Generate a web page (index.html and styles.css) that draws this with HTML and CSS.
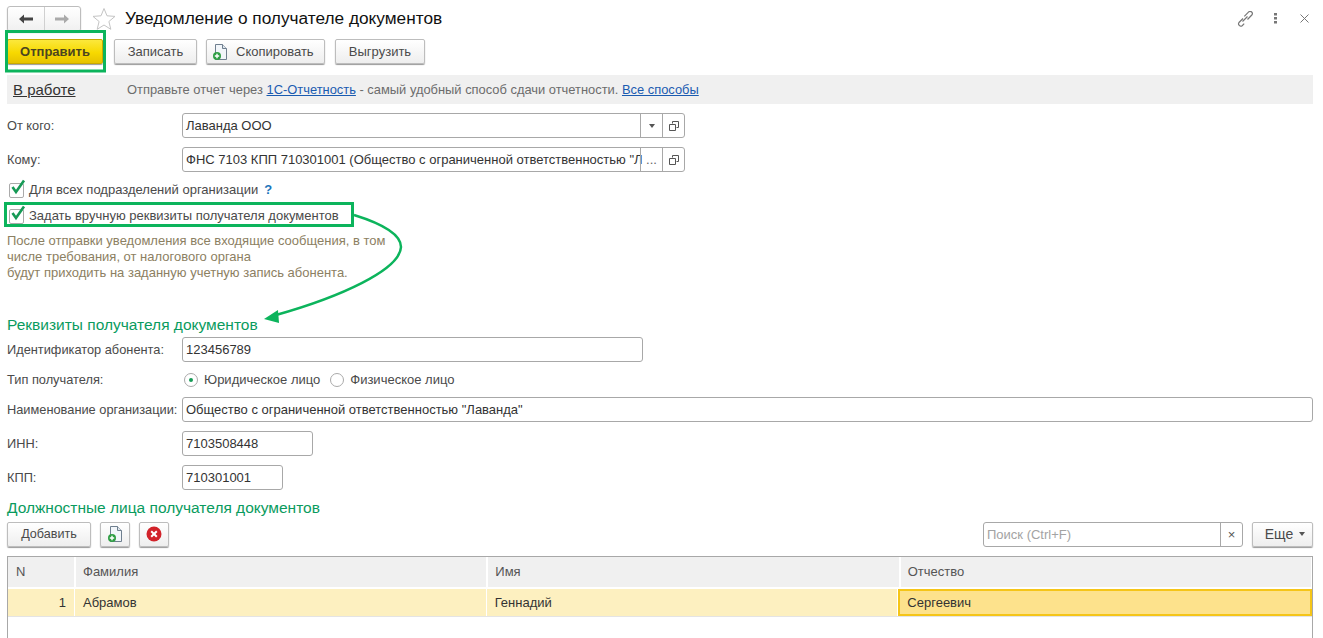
FILE: index.html
```html
<!DOCTYPE html>
<html lang="ru">
<head>
<meta charset="utf-8">
<title>Уведомление о получателе документов</title>
<link rel="stylesheet" href="styles.css">
</head>
<body>
<div class="page">
  <header class="titlebar">
    <div class="nav">
      <button class="nav-btn"><svg width="16" height="12" viewBox="0 0 16 12"><path d="M1 6l5-4.500V4.500h9v3H6v3z" fill="#444"/></svg></button>
      <button class="nav-btn"><svg width="16" height="12" viewBox="0 0 16 12"><path d="M15 6l-5-4.500V4.500H1v3h9v3z" fill="#aaa"/></svg></button>
    </div>
    <svg class="star" width="24" height="24" viewBox="0 0 24 24"><path d="M12 1.500l3 7.300 8 .6-6.100 5.100 1.900 7.800L12 18l-6.800 4.300 1.900-7.800L1 9.400l8-.6z" fill="#fff" stroke="#c4c4c4"/></svg>
    <h1 class="title">Уведомление о получателе документов</h1>
    <div class="win-tools">
      <svg width="17" height="16" viewBox="0 0 17 16"><path d="M6 7.500L2 11.500a2.300 2.300 0 0 0 3.200 3.200l2-2M10.500 8.500l4.300-4.500a2.200 2.200 0 0 0-3.100-3.100L7.300 5.300M5.500 10.500l5-5" fill="none" stroke="#777" stroke-width="1.200"/></svg>
      <svg width="3" height="11" viewBox="0 0 3 11"><path d="M0 0h3v2.500H0zM0 4h3v2.500H0zM0 8h3v2.500H0z" fill="#777"/></svg>
      <svg width="9" height="9" viewBox="0 0 9 9"><path d="M.5.500l8 8M8.500.500l-8 8" stroke="#777" fill="none"/></svg>
    </div>
  </header>

  <div class="toolbar">
    <button class="btn btn-primary">Отправить</button>
    <button class="btn btn-save">Записать</button>
    <button class="btn btn-copy">
      <svg class="doc-icon" width="14" height="16" viewBox="0 0 14 16"><path d="M2.500 .5h7l4 4v11h-11z" fill="#f2f6fa" stroke="#6f7f8f"/><path d="M9.500 .5v4h4" fill="#dfe6ec" stroke="#6f7f8f"/><circle cx="4" cy="12" r="4" fill="#2f9e44"/><path d="M4 9.800v4.400M1.800 12h4.400" stroke="#fff" stroke-width="1.400"/></svg>
      Скопировать
    </button>
    <button class="btn btn-export">Выгрузить</button>
  </div>

  <div class="status">
    <a class="status-link">В работе</a>
    <span class="status-text">Отправьте отчет через <a class="link">1С-Отчетность</a> - самый удобный способ сдачи отчетности. <a class="link">Все способы</a></span>
  </div>

  <div class="row row-from">
    <label class="lbl">От кого:</label>
    <div class="input combo"><span class="val">Лаванда ООО</span>
      <span class="addon"><i class="caret"></i></span>
      <span class="addon"><svg width="10" height="10" viewBox="0 0 10 10"><path d="M3.500 2.500V.5h6v6H7.500M.5 3.500h6v6h-6z" fill="none" stroke="#555"/></svg></span>
    </div>
  </div>
  <div class="row row-to">
    <label class="lbl">Кому:</label>
    <div class="input combo"><span class="val">ФНС 7103 КПП 710301001 (Общество с ограниченной ответственностью "Л</span>
      <span class="addon dots">...</span>
      <span class="addon"><svg width="10" height="10" viewBox="0 0 10 10"><path d="M3.500 2.500V.5h6v6H7.500M.5 3.500h6v6h-6z" fill="none" stroke="#555"/></svg></span>
    </div>
  </div>

  <div class="check check-a">
    <span class="box"><svg width="17" height="16" viewBox="0 0 17 16"><path d="M3.500 8l3.500 5L15 1.500" fill="none" stroke="#169a56" stroke-width="2.600"/></svg></span>
    <span>Для всех подразделений организации</span><span class="help">?</span>
  </div>
  <div class="check check-b">
    <span class="box"><svg width="17" height="16" viewBox="0 0 17 16"><path d="M3.500 8l3.500 5L15 1.500" fill="none" stroke="#169a56" stroke-width="2.600"/></svg></span>
    <span>Задать вручную реквизиты получателя документов</span>
  </div>

  <p class="note">После отправки уведомления все входящие сообщения, в том<br>числе требования, от налогового органа<br>будут приходить на заданную учетную запись абонента.</p>

  <h2 class="section section-a">Реквизиты получателя документов</h2>

  <div class="row row-id">
    <label class="lbl">Идентификатор абонента:</label>
    <div class="input w-id"><span class="val">123456789</span></div>
  </div>
  <div class="row row-type">
    <label class="lbl">Тип получателя:</label>
    <div class="radios">
      <span class="radio on"></span><span class="radio-text first">Юридическое лицо</span>
      <span class="radio"></span><span class="radio-text">Физическое лицо</span>
    </div>
  </div>
  <div class="row row-name">
    <label class="lbl">Наименование организации:</label>
    <div class="input w-full"><span class="val">Общество с ограниченной ответственностью "Лаванда"</span></div>
  </div>
  <div class="row row-inn">
    <label class="lbl">ИНН:</label>
    <div class="input w-inn"><span class="val">7103508448</span></div>
  </div>
  <div class="row row-kpp">
    <label class="lbl">КПП:</label>
    <div class="input w-kpp"><span class="val">710301001</span></div>
  </div>

  <h2 class="section section-b">Должностные лица получателя документов</h2>

  <div class="table-tools">
    <button class="btn btn-add">Добавить</button>
    <button class="btn btn-icon"><svg width="14" height="16" viewBox="0 0 14 16"><path d="M2.500 .5h7l4 4v11h-11z" fill="#f2f6fa" stroke="#6f7f8f"/><path d="M9.500 .5v4h4" fill="#dfe6ec" stroke="#6f7f8f"/><circle cx="4" cy="12" r="4" fill="#2f9e44"/><path d="M4 9.800v4.400M1.800 12h4.400" stroke="#fff" stroke-width="1.400"/></svg></button>
    <button class="btn btn-icon"><svg width="16" height="16" viewBox="0 0 16 16"><circle cx="8" cy="8" r="7.500" fill="#d2232a"/><path d="M5.200 5.200l5.600 5.600M10.800 5.200l-5.600 5.600" stroke="#fff" stroke-width="2"/></svg></button>
    <div class="spacer"></div>
    <div class="input search"><span class="val placeholder">Поиск (Ctrl+F)</span><span class="addon clear">×</span></div>
    <button class="btn btn-more">Еще <i class="caret"></i></button>
  </div>

  <div class="table">
    <div class="thead">
      <div class="cell c-n">N</div>
      <div class="cell c-f">Фамилия</div>
      <div class="cell c-f">Имя</div>
      <div class="cell c-f">Отчество</div>
    </div>
    <div class="trow">
      <div class="cell c-n num">1</div>
      <div class="cell c-f">Абрамов</div>
      <div class="cell c-f">Геннадий</div>
      <div class="cell c-f current">Сергеевич</div>
    </div>
  </div>

  <svg class="annot" width="1323" height="638" viewBox="0 0 1323 638">
    <rect x="6.500" y="31.500" width="98" height="39.500" fill="none" stroke="#0cb45c" stroke-width="3"/>
    <rect x="5.500" y="203.500" width="347" height="22" fill="none" stroke="#0cb45c" stroke-width="3"/>
    <path d="M354 215C383 224 401 235 401 247C400 270 340 297 276 315" fill="none" stroke="#0cb45c" stroke-width="2.500"/>
    <path d="M264 319L278 310L279 323z" fill="#0cb45c"/>
  </svg>
</div>
</body>
</html>
```
FILE: styles.css
```css
* { box-sizing: border-box; }
html, body { margin: 0; padding: 0; background: #fff; }
.page {
  position: relative;
  width: 1323px;
  height: 638px;
  overflow: hidden;
  padding: 0 10px 0 7px;
  font: 13px "Liberation Sans", Arial, sans-serif;
  color: #4a4a4a;
}
button { font: inherit; color: inherit; padding: 0; }

.titlebar { display: flex; align-items: center; height: 36px; padding-top: 1px; }
.nav {
  display: flex; width: 74px; height: 26px;
  border: 1px solid #bdbdbd; border-radius: 3px;
  box-shadow: 0 1px 1px #9a9a9a;
  background: linear-gradient(#fff, #f0f0f0);
}
.nav-btn { flex: 1; border: 0; background: none; display: flex; align-items: center; justify-content: center; }
.nav-btn + .nav-btn { border-left: 1px solid #d0d0d0; }
.star { margin-left: 11px; }
.title { margin: 0 0 0 9px; font-size: 17.250px; font-weight: 400; color: #111; }
.win-tools { margin-left: auto; display: flex; align-items: center; padding-right: 4px; }
.win-tools svg:nth-child(1) { margin-right: 20px; }
.win-tools svg:nth-child(2) { margin-right: 23px; }

.toolbar { display: flex; height: 26px; margin-top: 3px; }
.btn {
  height: 25px; display: inline-flex; align-items: center; justify-content: center;
  border: 1px solid #bdbdbd; border-radius: 2px;
  background: linear-gradient(#fff, #eee);
  box-shadow: 0 1px 1px #9a9a9a;
}
.btn-primary {
  width: 96px; border-color: #c9a900; font-weight: 700; color: #4b4520;
  background: linear-gradient(#fbe83c, #f7d900 55%, #e6c200);
}
.btn-save { width: 83px; margin-left: 11px; }
.btn-copy { width: 119px; margin-left: 9px; justify-content: flex-start; padding-left: 6px; }
.doc-icon { margin-right: 9px; }
.btn-export { width: 90px; margin-left: 10px; }

.status {
  display: flex; align-items: center; height: 29px; margin-top: 10px;
  background: #f0f0f0; padding-left: 6px;
}
.status-link { color: #333; font-size: 15px; text-decoration: underline; width: 114px; }
.status-text { color: #6c6c6c; font-size: 12.900px; }
.link { color: #1a5bb0; text-decoration: underline; }

.row { display: flex; align-items: center; height: 25px; }
.lbl { width: 175px; flex: none; white-space: nowrap; font-size: 12.800px; }
.input {
  display: flex; align-items: stretch; height: 25px;
  border: 1px solid #a8a8a8; border-radius: 3px; background: #fff; color: #333;
}
.val { flex: 1; min-width: 0; padding: 0 3px; line-height: 23px; white-space: nowrap; }
.combo { width: 503px; }
.addon { flex: none; width: 22px; border-left: 1px solid #a8a8a8; display: flex; align-items: center; justify-content: center; }
.dots { color: #666; }
.caret { display: inline-block; width: 0; height: 0; border: 3px solid transparent; border-top: 4px solid #555; border-bottom: 0; }

.row-from { margin-top: 9px; }
.row-to { margin-top: 9px; }
.check { display: flex; align-items: center; height: 20px; color: #4a4a4a; }
.check-a { margin-top: 7px; }
.check-b { margin-top: 6px; }
.box {
  position: relative; width: 15px; height: 15px; margin: 2px 5px 0 2px; flex: none;
  border: 1px solid #aaa; border-radius: 2px; background: #fff;
}
.box svg { position: absolute; left: -1px; top: -5px; }
.help { color: #1b75bb; font-weight: 700; margin-left: 6px; }
.note { margin: 8px 0 0; line-height: 16px; color: #8c8062; }
.section { margin: 0; font-size: 15.500px; font-weight: 400; color: #0a9b5e; line-height: 18px; }
.section-a { margin-top: 35px; }
.section-b { margin-top: 9px; }

.row-id { margin-top: 3px; }
.w-id { width: 461px; }
.row-type { margin-top: 5px; height: 25px; }
.radios { display: flex; align-items: center; margin-left: 2px; }
.radio { position: relative; width: 14px; height: 14px; border: 1px solid #aaa; border-radius: 50%; background: #fff; }
.radio.on::after { content: ""; position: absolute; left: 4px; top: 4px; width: 4px; height: 4px; border-radius: 50%; background: #169a56; }
.radio-text { margin-left: 6px; }
.radio-text.first { margin-right: 10px; }
.row-name { margin-top: 5px; }
.w-full { flex: 1; }
.row-inn { margin-top: 9px; }
.w-inn { width: 131px; }
.row-kpp { margin-top: 9px; }
.w-kpp { width: 101px; }

.table-tools { display: flex; align-items: center; height: 26px; margin-top: 4px; }
.btn-add { width: 84px; font-size: 12.600px; }
.btn-icon { width: 30px; margin-left: 9px; }
.spacer { flex: 1; }
.search { width: 260px; }
.placeholder { color: #a3a3a3; }
.clear { color: #555; }
.btn-more { width: 61px; margin-left: 9px; gap: 6px; font-size: 14px; padding-left: 5px; }

.table { height: 90px; margin-top: 9px; border: 1px solid #a8a8a8; border-bottom: 0; }
.thead { display: flex; height: 30px; gap: 1px; background: #fff; }
.thead .cell { background: #f0f0f0; padding-bottom: 2px; }
.thead .c-f { padding-left: 7px; }
.trow { display: flex; height: 28px; margin-top: 2px; background: #fdf0c0; border-bottom: 1px solid #e4e4e4; }
.cell { display: flex; align-items: center; padding-left: 8px; border-right: 1px solid #fff; }
.c-n { width: 67px; flex: none; }
.c-f { flex: 1; }
.num { justify-content: flex-end; padding-right: 8px; }
.current { background: #fde28c; border: 2px solid #f5c518; padding-left: 7px; color: #333; }
.trow .cell { color: #333; }
.thead .cell { color: #555; }

.annot { position: absolute; left: 0; top: 0; pointer-events: none; }
```
